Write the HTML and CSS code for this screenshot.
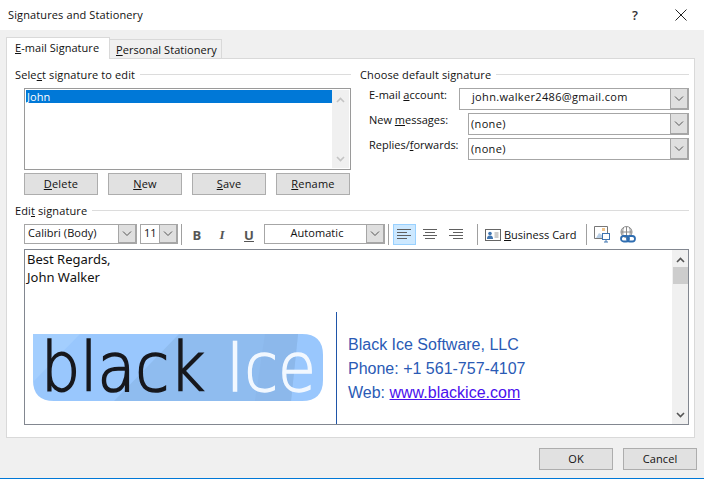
FILE: index.html
```html
<!DOCTYPE html>
<html lang="en">
<head>
<meta charset="utf-8">
<title>Signatures and Stationery</title>
<link rel="stylesheet" href="styles.css">
</head>
<body>
<div class="dialog">
  <header class="titlebar">
    <span class="title">Signatures and Stationery</span>
    <span class="help">?</span>
    <svg class="close" width="12" height="12" viewBox="0 0 12 12"><path d="M.5.5l11 11M11.500.5l-11 11" stroke="#222" fill="none"/></svg>
  </header>
  <main class="main">
    <nav class="tabs">
      <span class="tab active"><u>E</u>-mail Signature</span>
      <span class="tab"><u>P</u>ersonal Stationery</span>
    </nav>
    <section class="panel">
      <div class="upper">
        <div class="left">
          <div class="legend"><span>Sele<u>c</u>t signature to edit</span></div>
          <div class="listbox">
            <div class="items"><div class="item selected">John</div></div>
            <div class="vscroll list-scroll">
              <svg width="9" height="6" viewBox="0 0 9 6"><path d="M1 5l3.500-3.500L8 5" stroke="#c4c4c4" stroke-width="1.600" fill="none"/></svg>
              <svg width="9" height="6" viewBox="0 0 9 6"><path d="M1 1l3.500 3.500L8 1" stroke="#c4c4c4" stroke-width="1.600" fill="none"/></svg>
            </div>
          </div>
          <div class="btnrow">
            <button class="btn"><u>D</u>elete</button>
            <button class="btn"><u>N</u>ew</button>
            <button class="btn"><u>S</u>ave</button>
            <button class="btn"><u>R</u>ename</button>
          </div>
        </div>
        <div class="right">
          <div class="legend"><span>Choose default signature</span></div>
          <div class="rows">
            <div class="row">
              <label class="lbl lbl-short">E-mail <u>a</u>ccount:</label>
              <div class="combo"><span class="val val-mail">john.walker2486@gmail.com</span><span class="arrow"><svg width="10" height="6" viewBox="0 0 10 6"><path d="M1 .5l4 4 4-4" stroke="#555" fill="none"/></svg></span></div>
            </div>
            <div class="row">
              <label class="lbl">New <u>m</u>essages:</label>
              <div class="combo"><span class="val">(none)</span><span class="arrow"><svg width="10" height="6" viewBox="0 0 10 6"><path d="M1 .5l4 4 4-4" stroke="#555" fill="none"/></svg></span></div>
            </div>
            <div class="row">
              <label class="lbl">Replies/<u>f</u>orwards:</label>
              <div class="combo"><span class="val">(none)</span><span class="arrow"><svg width="10" height="6" viewBox="0 0 10 6"><path d="M1 .5l4 4 4-4" stroke="#555" fill="none"/></svg></span></div>
            </div>
          </div>
        </div>
      </div>
      <div class="legend edit-legend"><span>Edi<u>t</u> signature</span></div>
      <div class="toolbar">
        <div class="combo tcombo font-combo"><span class="val">Calibri (Body)</span><span class="arrow"><svg width="10" height="6" viewBox="0 0 10 6"><path d="M1 .5l4 4 4-4" stroke="#555" fill="none"/></svg></span></div>
        <div class="combo tcombo size-combo"><span class="val">11</span><span class="arrow"><svg width="10" height="6" viewBox="0 0 10 6"><path d="M1 .5l4 4 4-4" stroke="#555" fill="none"/></svg></span></div>
        <span class="sep sep-a"></span>
        <span class="fmt fmt-b">B</span>
        <span class="fmt fmt-i">I</span>
        <span class="fmt fmt-u">U</span>
        <div class="combo tcombo color-combo"><span class="val center">Automatic</span><span class="arrow"><svg width="10" height="6" viewBox="0 0 10 6"><path d="M1 .5l4 4 4-4" stroke="#555" fill="none"/></svg></span></div>
        <span class="sep sep-b"></span>
        <span class="align on"><svg width="14" height="11" viewBox="0 0 14 11"><path d="M0 .5h14M0 3.500h10M0 6.500h14M0 9.500h10" stroke="#5f5f5f" fill="none"/></svg></span>
        <span class="align"><svg width="14" height="11" viewBox="0 0 14 11"><path d="M0 .5h14M2 3.500h10M0 6.500h14M2 9.500h10" stroke="#5f5f5f" fill="none"/></svg></span>
        <span class="align"><svg width="14" height="11" viewBox="0 0 14 11"><path d="M0 .5h14M4 3.500h10M0 6.500h14M4 9.500h10" stroke="#5f5f5f" fill="none"/></svg></span>
        <span class="sep sep-c"></span>
        <svg class="card" width="16" height="12" viewBox="0 0 16 12"><rect x=".5" y=".5" width="15" height="11" fill="#fff" stroke="#666"/><circle cx="5" cy="4.500" r="1.800" fill="#3f74b0"/><path d="M2 10c0-3 1.500-3.500 3-3.500S8 7 8 10z" fill="#3f74b0"/><path d="M9.500 4h4M9.500 6h4M9.500 8h4" stroke="#999"/></svg>
        <span class="bizcard"><u>B</u>usiness Card</span>
        <span class="sep sep-d"></span>
        <svg class="pic" width="17" height="17" viewBox="0 0 17 17"><path d="M.5 12.500V.5h13v7" fill="#fff" stroke="#777"/><path d="M.5 12.500h8" stroke="#777"/><path d="M2 12l3-5 3 2v3z" fill="#b9cfe6"/><rect x="8" y="2" width="3" height="3" fill="#f2c48a"/><rect x="8.500" y="7.500" width="7" height="6" fill="#fff" stroke="#3f74b0"/><path d="M10 16h4M12 14v2" stroke="#3f74b0"/></svg>
        <svg class="link" width="17" height="17" viewBox="0 0 17 17"><circle cx="6.500" cy="6" r="5.500" fill="#fff" stroke="#8a8a8a"/><path d="M1 6h11M6.500.5v10M3.500 1.500c-1 2-1 7 0 9M9.500 1.500c1 2 1 7 0 9" stroke="#8a8a8a" fill="none"/><rect x="1" y="10" width="8" height="5.500" rx="2.750" fill="none" stroke="#2f6db0" stroke-width="1.800"/><rect x="7" y="10" width="8" height="5.500" rx="2.750" fill="none" stroke="#2f6db0" stroke-width="1.800"/></svg>
      </div>
      <div class="editor">
        <div class="doc">
          <p class="greeting">Best Regards,<br>John Walker</p>
          <div class="sig">
            <svg class="logo" width="290" height="67" viewBox="0 0 290 67">
              <defs><clipPath id="logo-clip"><path d="M0 0H269Q290 0 290 21V46Q290 67 269 67H21Q0 67 0 46Z"/></clipPath></defs>
              <g clip-path="url(#logo-clip)">
                <rect width="290" height="67" fill="#99c7fd"/>
                <path d="M0 0H47L0 48Z" fill="#a3cefe"/>
                <path d="M146 0H265L258 67H81Z" fill="#8fbcef"/>
                <path d="M232 0H265L258 67H222Z" fill="#8ab6e8" opacity=".6"/>
              </g>
              <text class="logo-black" x="8" y="57" textLength="164" lengthAdjust="spacingAndGlyphs">black</text>
              <text class="logo-ice" x="193" y="57" textLength="90" lengthAdjust="spacingAndGlyphs">Ice</text>
            </svg>
            <div class="contact">
              <div>Black Ice Software, LLC</div>
              <div>Phone: +1 561-757-4107</div>
              <div>Web: <a class="weblink" href="#">www.blackice.com</a></div>
            </div>
          </div>
        </div>
        <div class="vscroll edit-scroll">
          <svg width="9" height="6" viewBox="0 0 9 6"><path d="M1 5l3.500-3.500L8 5" stroke="#555" stroke-width="1.600" fill="none"/></svg>
          <span class="thumb"></span>
          <span class="spacer"></span>
          <svg width="9" height="6" viewBox="0 0 9 6"><path d="M1 1l3.500 3.500L8 1" stroke="#555" stroke-width="1.600" fill="none"/></svg>
        </div>
      </div>
    </section>
    <footer class="footer">
      <button class="btn">OK</button>
      <button class="btn btn-cancel">Cancel</button>
    </footer>
  </main>
</div>
</body>
</html>
```
FILE: styles.css
```css
* { box-sizing: border-box; }
html, body { margin: 0; padding: 0; }
body { width: 704px; height: 479px; overflow: hidden; background: #fff; font: 11px/14px "Open Sans", sans-serif; color: #111; letter-spacing: .1px; }
u { text-underline-offset: 1px; }
.dialog { width: 704px; height: 479px; display: flex; flex-direction: column; border-bottom: 1px solid #0078d7; }
.titlebar { height: 30px; flex: none; display: flex; align-items: center; padding: 0 17px 0 8px; background: #fff; }
.title { flex: 1; letter-spacing: .12px; }
.help { width: 10px; font-size: 13px; font-weight: 600; margin-right: 33px; color: #333; }
.main { flex: 1; background: #f0f0f0; padding: 7px 9px 0 6px; display: flex; flex-direction: column; }
.tabs { display: flex; height: 21px; align-items: flex-end; position: relative; z-index: 1; white-space: nowrap; letter-spacing: .05px; }
.tab { height: 19px; width: 113px; background: #f0f0f0; border: 1px solid #d9d9d9; border-bottom: 0; padding: 3px 0 0 6px; margin-left: -1px; }
.tab.active { width: 104px; margin-left: 0; background: #fff; padding: 3px 0 0 8px; margin-bottom: -1px; height: 22px; z-index: 2; position: relative; }
.panel { height: 380px; background: #fff; border: 1px solid #d9d9d9; padding: 9px 5px 0 8px; }
.upper { display: flex; gap: 9px; }
.left { width: 336px; }
.right { width: 329px; }
.legend { display: flex; align-items: center; gap: 5px; height: 14px; letter-spacing: .12px; }
.legend::after { content: ""; flex: 1; height: 1px; background: #dcdcdc; margin-top: -2px; }
.listbox { margin: 6px 0 0 9px; height: 82px; width: 327px; border: 1px solid #9a9a9a; background: #fff; padding: 1px; display: flex; }
.items { flex: 1; }
.item { height: 13px; padding-left: 1px; line-height: 13px; }
.selected { background: #0078d7; color: #fff; }
.vscroll { width: 17px; background: #f0f0f0; display: flex; flex-direction: column; align-items: center; }
.list-scroll { justify-content: space-between; padding: 7px 0 6px; }
.btnrow { display: flex; gap: 10px; margin: 3px 0 0 9px; }
.btn { width: 74px; height: 22px; padding: 0; background: #e1e1e1; border: 1px solid #adadad; font: inherit; letter-spacing: .2px; color: #111; }
.rows { display: flex; flex-direction: column; gap: 3px; margin-top: 6px; padding-left: 9px; }
.row { display: flex; height: 22px; }
.lbl { width: 99px; flex: none; letter-spacing: 0; }
.lbl-short { width: 90px; }
.combo { flex: 1; display: flex; height: 22px; border: 1px solid #a6a6a6; background: #fff; align-items: flex-start; }
.val { flex: 1; padding: 3px 0 0 2px; letter-spacing: .33px; }
.val-mail { padding: 1px 0 0 12px; }
.center { text-align: center; }
.arrow { width: 18px; height: 20px; flex: none; background: #dfdfdf; border-left: 1px solid #a6a6a6; border-right: 1px solid #a6a6a6; border-bottom: 1px solid #a6a6a6; display: flex; align-items: center; justify-content: center; }
.edit-legend { margin-top: 9px; }
.toolbar { display: flex; align-items: center; height: 21px; margin: 6px 0 0 9px; }
.tcombo { flex: none; height: 20px; margin-top: -1px; }
.tcombo .val { padding-top: 1px; padding-left: 3px; letter-spacing: .05px; white-space: nowrap; }
.tcombo .arrow { height: 18px; }
.font-combo { width: 113px; }
.size-combo { width: 38px; margin-left: 3px; }
.color-combo { width: 121px; }
.sep { width: 1px; height: 21px; background: #a0a0a0; flex: none; }
.sep-a { margin-left: 3px; }
.fmt { width: 10px; text-align: center; font-size: 13px; color: #555; flex: none; font-weight: 700; margin-top: 1px; }
.fmt-b { margin-left: 10px; }
.fmt-i { margin-left: 15px; font-style: italic; font-family: "Liberation Serif", serif; }
.fmt-u { margin-left: 17px; text-decoration: underline; margin-right: 10px; }
.sep-b { margin-left: 3px; }
.align { width: 23px; height: 21px; flex: none; display: flex; align-items: center; padding-left: 3px; margin-left: 3px; border: 1px solid transparent; }
.align.on { margin-left: 4px; background: #cce8ff; border-color: #99d1ff; }
.sep-c { margin-left: 9px; }
.card { margin-left: 7px; flex: none; }
.bizcard { margin-left: 3px; width: 76px; flex: none; white-space: nowrap; letter-spacing: 0; }
.sep-d { margin-left: 6px; }
.pic { margin-left: 7px; flex: none; }
.link { margin-left: 9px; flex: none; }
.editor { margin: 4px 0 0 9px; width: 665px; height: 176px; border: 1px solid #828790; display: flex; background: #fff; overflow: hidden; }
.doc { flex: 1; min-width: 0; }
.greeting { margin: 0; padding: 0 0 0 2px; font: 13px/18px "Noto Sans", sans-serif; letter-spacing: 0; color: #111; height: 62px; }
.sig { display: flex; height: 112px; }
.logo { flex: none; margin: 22px 0 0 8px; overflow: visible; }
.logo-black { font: 200 68px "DejaVu Sans", sans-serif; letter-spacing: 0; fill: #17181d; stroke: #17181d; stroke-width: 1.700px; }
.logo-ice { font: 200 68px "DejaVu Sans", sans-serif; letter-spacing: 0; fill: #f2f8ff; stroke: #f2f8ff; stroke-width: 1.400px; }
.contact { margin-left: 13px; padding: 21px 0 0 11px; border-left: 1px solid #1f55a8; font: 16px/24px "Liberation Sans", sans-serif; letter-spacing: 0; color: #2a5ab5; white-space: nowrap; }
.weblink { color: #4a10ee; text-decoration: underline; }
.edit-scroll { width: 16px; padding: 7px 0 6px; }
.thumb { display: block; width: 15px; height: 17px; background: #cdcdcd; margin-top: 4px; }
.spacer { flex: 1; }
.footer { display: flex; justify-content: flex-end; gap: 10px; margin: 10px -2px 0 0; }
.btn-cancel { letter-spacing: .1px; }
```
